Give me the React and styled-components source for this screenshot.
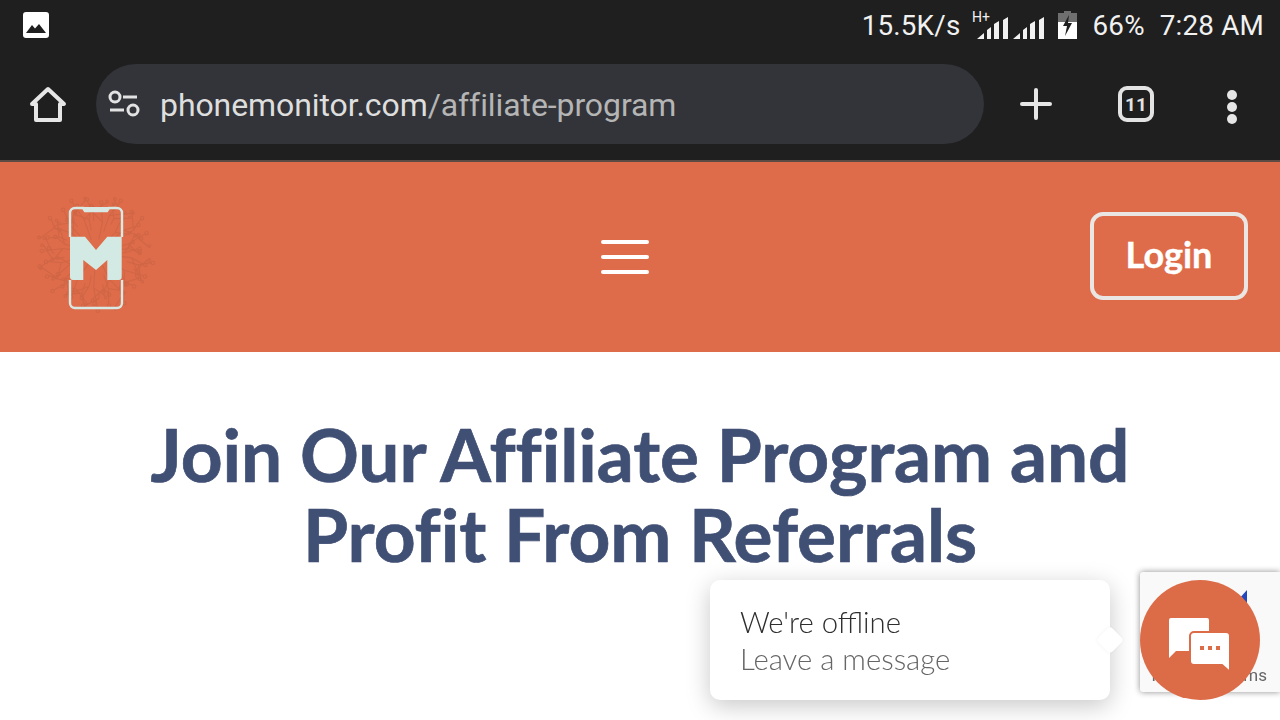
import styled, { createGlobalStyle } from "styled-components";

const Global = createGlobalStyle`
html,body{margin:0;padding:0;background:#fff;}
body{width:1280px;height:720px;overflow:hidden;font-family:"Roboto",sans-serif;}
`;

const Page = styled.div`
width:1280px;
height:720px;
display:flex;
flex-direction:column;
overflow:hidden;
`;

const StatusBar = styled.div`
height:52px;
background:#1f1f1f;
display:flex;
align-items:center;
justify-content:space-between;
padding:0 16px 2px 23px;
box-sizing:border-box;
color:#f1f1f1;
font-family:"Roboto",sans-serif;
font-size:27.8px;
`;

const StatusRight = styled.div`
display:flex;
align-items:center;
`;

const StatusText = styled.span`
margin-left:${p => p.$gap}px;
letter-spacing:0.2px;
`;

const StatusIcon = styled.svg`
display:block;
margin-left:${p => p.$gap || 0}px;
`;

const Toolbar = styled.div`
height:110px;
box-sizing:border-box;
background:#1f1f1f;
border-bottom:2px solid #5c4a44;
display:flex;
align-items:flex-start;
padding:12px 0 0 28px;
`;

const ToolIcon = styled.svg`
display:block;
flex:none;
margin:${p => p.$m};
`;

const UrlBar = styled.div`
width:888px;
height:80px;
margin-left:28px;
border-radius:40px;
background:#323439;
display:flex;
align-items:center;
padding:2px 0 0 12px;
box-sizing:border-box;
font-size:32px;
letter-spacing:-0.09px;
flex:none;
`;

const TuneIcon = styled.svg`
display:block;
margin-top:-2px;
`;

const Domain = styled.span`
color:#dedede;
margin-left:20px;
`;

const UrlPath = styled.span`
color:#b5b5b5;
`;

const TabCount = styled.div`
width:36px;
height:36px;
box-sizing:border-box;
border:4px solid #e3e3e3;
border-radius:9px;
margin:22px 0 0 66px;
color:#e3e3e3;
font-size:19px;
font-weight:700;
display:flex;
align-items:center;
justify-content:center;
flex:none;
`;

const Header = styled.header`
height:190px;
flex:none;
background:#de6c4a;
display:flex;
align-items:center;
justify-content:space-between;
padding:0 32px 0 36px;
`;

const Burger = styled.button`
width:48px;
height:34px;
padding:0;
border:none;
background:none;
display:flex;
flex-direction:column;
justify-content:space-between;
`;

const BurgerLine = styled.span`
display:block;
height:4px;
background:#fff;
border-radius:2px;
`;

const LoginButton = styled.button`
width:158px;
height:88px;
margin-bottom:2px;
box-sizing:border-box;
border:4px solid #e9e6e4;
border-radius:13px;
background:none;
color:#fff;
font-family:"Lato",sans-serif;
font-weight:700;
font-size:36px;
padding:0 0 4px;
-webkit-text-stroke:0.4px #fff;
`;

const Title = styled.h1`
margin:0;
padding-top:62px;
text-align:center;
color:#404f74;
font-family:"Lato",sans-serif;
font-weight:700;
font-size:73px;
line-height:80px;
letter-spacing:-0.05px;
-webkit-text-stroke:0.7px #404f74;
`;

const Recaptcha = styled.div`
position:fixed;
left:1140px;
top:572px;
width:140px;
height:120px;
background:#f9f9f9;
border-radius:3px 0 0 3px;
box-shadow:0 0 6px rgba(0,0,0,.45);
`;

const RecaptchaMark = styled.svg`
position:absolute;
left:98px;
top:18px;
`;

const RecaptchaTerms = styled.span`
position:absolute;
right:13px;
bottom:7px;
font-size:17px;
color:#666;
white-space:nowrap;
`;

const ChatPopup = styled.div`
position:fixed;
left:710px;
top:580px;
width:400px;
height:120px;
box-sizing:border-box;
padding:23px 30px;
background:#fff;
border-radius:10px;
box-shadow:0 6px 24px rgba(0,0,0,.22);
font-family:"Lato",sans-serif;
font-size:29.3px;
line-height:37px;
`;

const ChatDiamond = styled.span`
position:absolute;
right:-10px;
top:50px;
width:20px;
height:20px;
background:#fff;
border-radius:4px;
transform:rotate(45deg);
box-shadow:0 0 4px rgba(0,0,0,.06);
`;

const ChatTitle = styled.div`
color:#2e2e2e;
font-weight:300;
`;

const ChatSub = styled.div`
color:#666;
font-weight:300;
`;

const ChatBubble = styled.button`
position:fixed;
left:1140px;
top:580px;
width:120px;
height:120px;
border:none;
padding:0;
border-radius:50%;
background:#dc6b48;
display:flex;
align-items:center;
justify-content:center;
`;

// circuit traces behind the phone, spread round the logo centre
const traces = Array.from({ length: 46 }, (_, i) => {
  const a = (i / 46) * Math.PI * 2;
  const r1 = 14 + (i % 4) * 9;
  const r2 = 42 + ((i * 7) % 5) * 3.5;
  const bend = a + (i % 2 ? 0.1 : -0.1);
  const x = 60, y = 58;
  const mid = (r1 + r2) / 2;
  const side = a + (i % 3 ? 0.28 : -0.28);
  return {
    d: `M${x + Math.cos(a) * r1} ${y + Math.sin(a) * r1}L${x + Math.cos(a) * mid} ${y + Math.sin(a) * mid}L${x + Math.cos(bend) * r2} ${y + Math.sin(bend) * r2}M${x + Math.cos(a) * mid} ${y + Math.sin(a) * mid}L${x + Math.cos(side) * (mid + 9)} ${y + Math.sin(side) * (mid + 9)}`,
    cx: x + Math.cos(bend) * (r2 + 1.8),
    cy: y + Math.sin(bend) * (r2 + 1.8),
    bx: x + Math.cos(side) * (mid + 10.5),
    by: y + Math.sin(side) * (mid + 10.5),
  };
});

function Logo() {
  return (
    <svg width="124" height="124" viewBox="0 0 124 124">
      <g fill="none" stroke="#d06646" strokeWidth="1.1">
        {traces.map((t, i) => (
          <g key={i}>
            <path d={t.d} />
            <circle cx={t.cx} cy={t.cy} r="1.7" />
            <circle cx={t.bx} cy={t.by} r="1.3" />
          </g>
        ))}
      </g>
      <path d="M34 42V18a5 5 0 0 1 5-5H47l2 3H71l2-3H81a5 5 0 0 1 5 5V42M86 85V108a5 5 0 0 1-5 5H39a5 5 0 0 1-5-5V85" fill="none" stroke="#d8e9e3" strokeWidth="2.4" />
      <path d="M47 12h26l-2 4H49z" fill="#d8e9e3" />
      <path d="M34 41.7H49L60 55L71.3 41.7H85.7V82a3 3 0 0 1-3 3H71.3V65L60 75L47.3 65V85H37a3 3 0 0 1-3-3z" fill="#d3e9e3" />
    </svg>
  );
}

function SignalBars() {
  return <path d="M0 22L7 16V22ZM10 22V13L14 10V22ZM17 22V7L22 4V22ZM26 22V3L31 0V22Z" fill="#f1f1f1" />;
}

export default function App() {
  return (
    <Page>
      <Global />
      <StatusBar>
        <StatusIcon width="26" height="26" viewBox="0 0 26 26">
          <rect width="26" height="26" rx="3" fill="#fff" />
          <path d="M3 21L9 13L12 16.5L16 12L23 21Z" fill="#1f1f1f" />
        </StatusIcon>
        <StatusRight>
          <StatusText>15.5K/s</StatusText>
          <StatusIcon $gap={12} width="73" height="30" viewBox="0 0 73 30">
            <text x="0" y="12" fontFamily="Roboto" fontSize="14" fill="#f1f1f1">H+</text>
            <g transform="translate(5 7)"><SignalBars /></g>
            <g transform="translate(41 7)"><SignalBars /></g>
          </StatusIcon>
          <StatusIcon $gap={13} width="19" height="28" viewBox="0 0 19 28">
            <path d="M6 0H13V2H19V28H0V2H6Z" fill="#6f6f6f" />
            <path d="M0 11H19V28H0Z" fill="#fff" />
            <path d="M11 4L5 15H9L7 25L14 12H10Z" fill="#1f1f1f" />
          </StatusIcon>
          <StatusText $gap={15}>66%</StatusText>
          <StatusText $gap={15}>7:28 AM</StatusText>
        </StatusRight>
      </StatusBar>
      <Toolbar>
        <ToolIcon $m="22px 0 0 0" width="40" height="38" viewBox="0 0 40 38" fill="none" stroke="#e6e6e6" strokeWidth="4" strokeLinejoin="round" strokeLinecap="round">
          <path d="M4 18L20 3L36 18H32V34H8V18Z" />
        </ToolIcon>
        <UrlBar>
          <TuneIcon width="32" height="28" viewBox="0 0 32 28" fill="none" stroke="#e2e2e2" strokeWidth="3">
            <circle cx="7" cy="7" r="5" />
            <path d="M15 7H29M2 20H16" />
            <circle cx="25" cy="20" r="5" />
          </TuneIcon>
          <Domain>phonemonitor.com</Domain>
          <UrlPath>/affiliate-program</UrlPath>
        </UrlBar>
        <ToolIcon $m="24px 0 0 36px" width="32" height="32" viewBox="0 0 32 32" stroke="#e6e6e6" strokeWidth="4" strokeLinecap="round">
          <path d="M16 2V30M2 16H30" />
        </ToolIcon>
        <TabCount>11</TabCount>
        <ToolIcon $m="26px 0 0 72px" width="12" height="34" viewBox="0 0 12 34" fill="#e6e6e6">
          <circle cx="6" cy="5" r="5" />
          <circle cx="6" cy="17" r="5" />
          <circle cx="6" cy="29" r="5" />
        </ToolIcon>
      </Toolbar>
      <Header>
        <Logo />
        <Burger>
          <BurgerLine />
          <BurgerLine />
          <BurgerLine />
        </Burger>
        <LoginButton>Login</LoginButton>
      </Header>
      <Title>Join Our Affiliate Program and<br />Profit From Referrals</Title>
      <Recaptcha>
        <RecaptchaMark width="10" height="18" viewBox="0 0 10 18">
          <path d="M9 0V16L0 10Z" fill="#2348bd" />
        </RecaptchaMark>
        <RecaptchaTerms>Privacy - Terms</RecaptchaTerms>
      </Recaptcha>
      <ChatPopup>
        <ChatTitle>We're offline</ChatTitle>
        <ChatSub>Leave a message</ChatSub>
        <ChatDiamond />
      </ChatPopup>
      <ChatBubble>
        <svg width="64" height="64" viewBox="0 0 64 64">
          <path d="M1 12a2 2 0 0 1 2-2H39a2 2 0 0 1 2 2V41a2 2 0 0 1-2 2H8L1 50Z" fill="#fff" />
          <path d="M22 28a4 4 0 0 1 4-4H58a4 4 0 0 1 4 4V64L54 57H26a4 4 0 0 1-4-4Z" fill="#fff" stroke="#dc6b48" strokeWidth="2" />
          <path d="M32 38h4v4h-4zM40 38h4v4h-4zM48 38h4v4h-4z" fill="#dc6b48" />
        </svg>
      </ChatBubble>
    </Page>
  );
}
